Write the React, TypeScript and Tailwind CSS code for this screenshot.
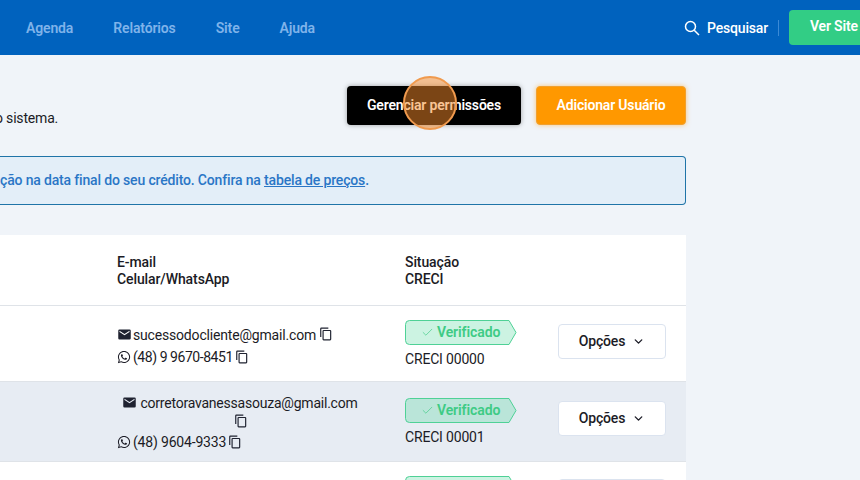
import React from "react";
import { ChevronDown, Check } from "lucide-react";
import { FaWhatsapp } from "react-icons/fa";

function MailIcon() {
  return (
    <svg viewBox="0 0 24 24" className="h-[15px] w-[15px] shrink-0 fill-[#1f2230]">
      <path d="M20 4H4a2 2 0 0 0-2 2v12a2 2 0 0 0 2 2h16a2 2 0 0 0 2-2V6a2 2 0 0 0-2-2zm0 4-8 5-8-5V6l8 5 8-5v2z" />
    </svg>
  );
}

function CopyIcon() {
  return (
    <svg viewBox="0 0 24 24" className="inline-block h-[14px] w-[14px] shrink-0 fill-[#1f2230]">
      <path d="M16 1H4a2 2 0 0 0-2 2v14h2V3h12V1zm3 4H8a2 2 0 0 0-2 2v14a2 2 0 0 0 2 2h11a2 2 0 0 0 2-2V7a2 2 0 0 0-2-2zm0 16H8V7h11v14z" />
    </svg>
  );
}

function Badge({ label }: { label?: string }) {
  return (
    <div className="relative flex h-[25px] w-[112px] items-center pl-[16px] text-[14px] font-semibold tracking-[-0.1px] text-[#3ecb85]">
      <svg viewBox="0 0 112 25" className="absolute inset-0 h-full w-full">
        <path
          d="M4.5 .5H104L111 12.5L104 24.5H4.5A4 4 0 0 1 .5 20.5V4.5A4 4 0 0 1 4.5 .5Z"
          className="fill-[#35d08a]/25 stroke-[#4fd196]"
        />
      </svg>
      {label && (
        <>
          <Check className="relative mr-[3px] h-[13px] w-[13px] text-[#3ecb85]" strokeWidth={1.25} />
          <span className="relative">{label}</span>
        </>
      )}
    </div>
  );
}

function OptionsButton() {
  return (
    <button className="flex h-[35px] w-[108px] items-center justify-center gap-[7px] rounded-[4px] border border-[#dbe3ef] bg-white text-[14px] font-medium text-[#1b1b25]">
      Opções
      <ChevronDown className="h-[13px] w-[13px]" strokeWidth={2.5} />
    </button>
  );
}

export default function App() {
  return (
    <div className="h-[480px] w-[860px] overflow-hidden bg-[#f0f4f9] font-['Roboto',sans-serif] text-[14px] tracking-[-0.18px] text-[#1b1b25]">
      <header className="flex h-[55px] items-center bg-[#0062be] pl-[26px]">
        <nav className="flex gap-[40px] pt-[1px] text-[14px] font-semibold tracking-[-0.14px] text-[#7fb3ea]">
          <a>Agenda</a>
          <a>Relatórios</a>
          <a>Site</a>
          <a>Ajuda</a>
        </nav>
        <div className="ml-auto flex items-center">
          <svg viewBox="0 0 16 16" className="mr-[7px] h-[16px] w-[16px] fill-none stroke-white stroke-[1.5]">
            <circle cx="6.5" cy="6.5" r="5" />
            <path d="M10.2 10.2 15 15" />
          </svg>
          <span className="pt-[1px] font-medium text-white">Pesquisar</span>
          <div className="ml-[10px] h-[16px] w-px bg-[#3b8ad6]" />
          <button className="ml-[10px] h-[35px] w-[71px] rounded-l-[4px] bg-[#32cd85] pb-[3px] pl-[21px] text-left font-semibold whitespace-nowrap text-white">
            Ver Site
          </button>
        </div>
      </header>

      <main className="w-[686px]">
        <div className="flex h-[101px] items-start justify-between">
          <p className="mt-[53px] -ml-[5px]">o sistema.</p>
          <div className="mt-[31px] flex gap-[15px]">
            <div className="relative">
              <button className="h-[39px] w-[174px] rounded-[4px] bg-black font-semibold text-white shadow-[0_0_5px_rgba(0,0,0,0.35)]">
                Gerenciar permissões
              </button>
              <span className="absolute left-[56px] top-[-10px] h-[54px] w-[54px] rounded-full border-2 border-[#f09a4e] bg-[#f58a2a]/50" />
            </div>
            <button className="h-[39px] w-[150px] rounded-[4px] border border-[#f0a030] bg-[#ff9800] font-semibold text-white shadow-[0_0_5px_rgba(255,152,0,0.5)]">
              Adicionar Usuário
            </button>
          </div>
        </div>

        <div className="flex h-[49px] items-center rounded-r-[4px] border-y border-r border-[#1f74a8] bg-[#e3eef8] font-medium tracking-[-0.16px] text-[#2a76c6]">
          <p>
            ção na data final do seu crédito. Confira na <a className="underline">tabela de preços</a>.
          </p>
        </div>

        <section className="mt-[30px] bg-white">
          <div className="grid h-[71px] grid-cols-[117px_288px_1fr] items-center border-b border-[#dfe3e8] pt-[1px] font-medium leading-[17px] tracking-[-0.1px]">
            <div />
            <div>E-mail<br />Celular/WhatsApp</div>
            <div>Situação<br />CRECI</div>
          </div>

          <div className="grid h-[76px] grid-cols-[117px_288px_153px_108px] items-center border-b border-[#dfe3e8]">
            <div />
            <div className="pt-[4px] leading-[22px]">
              <div className="flex items-center gap-[1px]">
                <MailIcon />
                <span>sucessodocliente@gmail.com</span>
                <span className="ml-[2px] -mt-[2px] flex"><CopyIcon /></span>
              </div>
              <div className="flex items-center gap-[1px]">
                <FaWhatsapp className="h-[14px] w-[14px]" />
                <span className="ml-[1px] tracking-[-0.45px]">(48) 9 9670-8451</span>
                <span className="ml-[1px] flex"><CopyIcon /></span>
              </div>
            </div>
            <div>
              <Badge label="Verificado" />
              <p className="mt-[5px] leading-[18px]">CRECI 00000</p>
            </div>
            <div className="mt-[18px] self-start">
              <OptionsButton />
            </div>
          </div>

          <div className="grid h-[80px] grid-cols-[117px_288px_153px_108px] items-center border-b border-[#dfe3e8] bg-[#e7ecf3]">
            <div />
            <div className="w-[248px] pt-[1px] leading-[22px]">
              <div className="flex items-center justify-center gap-[3px] pr-[2px] tracking-[-0.22px]">
                <MailIcon />
                <span>corretoravanessasouza@gmail.com</span>
              </div>
              <div className="flex justify-center"><CopyIcon /></div>
              <div className="mt-[3px] flex items-center gap-[1px]">
                <FaWhatsapp className="h-[14px] w-[14px]" />
                <span className="ml-[1px]">(48) 9604-9333</span>
                <span className="ml-[1px] flex"><CopyIcon /></span>
              </div>
            </div>
            <div>
              <Badge label="Verificado" />
              <p className="mt-[5px] leading-[18px]">CRECI 00001</p>
            </div>
            <div className="mt-[19px] self-start">
              <OptionsButton />
            </div>
          </div>

          <div className="grid h-[76px] grid-cols-[117px_288px_153px_108px]">
            <div />
            <div />
            <div className="pt-[14px]"><Badge /></div>
            <div className="pt-[17px]"><div className="h-[35px] w-[108px] rounded-[4px] border border-[#dbe3ef] bg-white" /></div>
          </div>
        </section>
      </main>
    </div>
  );
}
